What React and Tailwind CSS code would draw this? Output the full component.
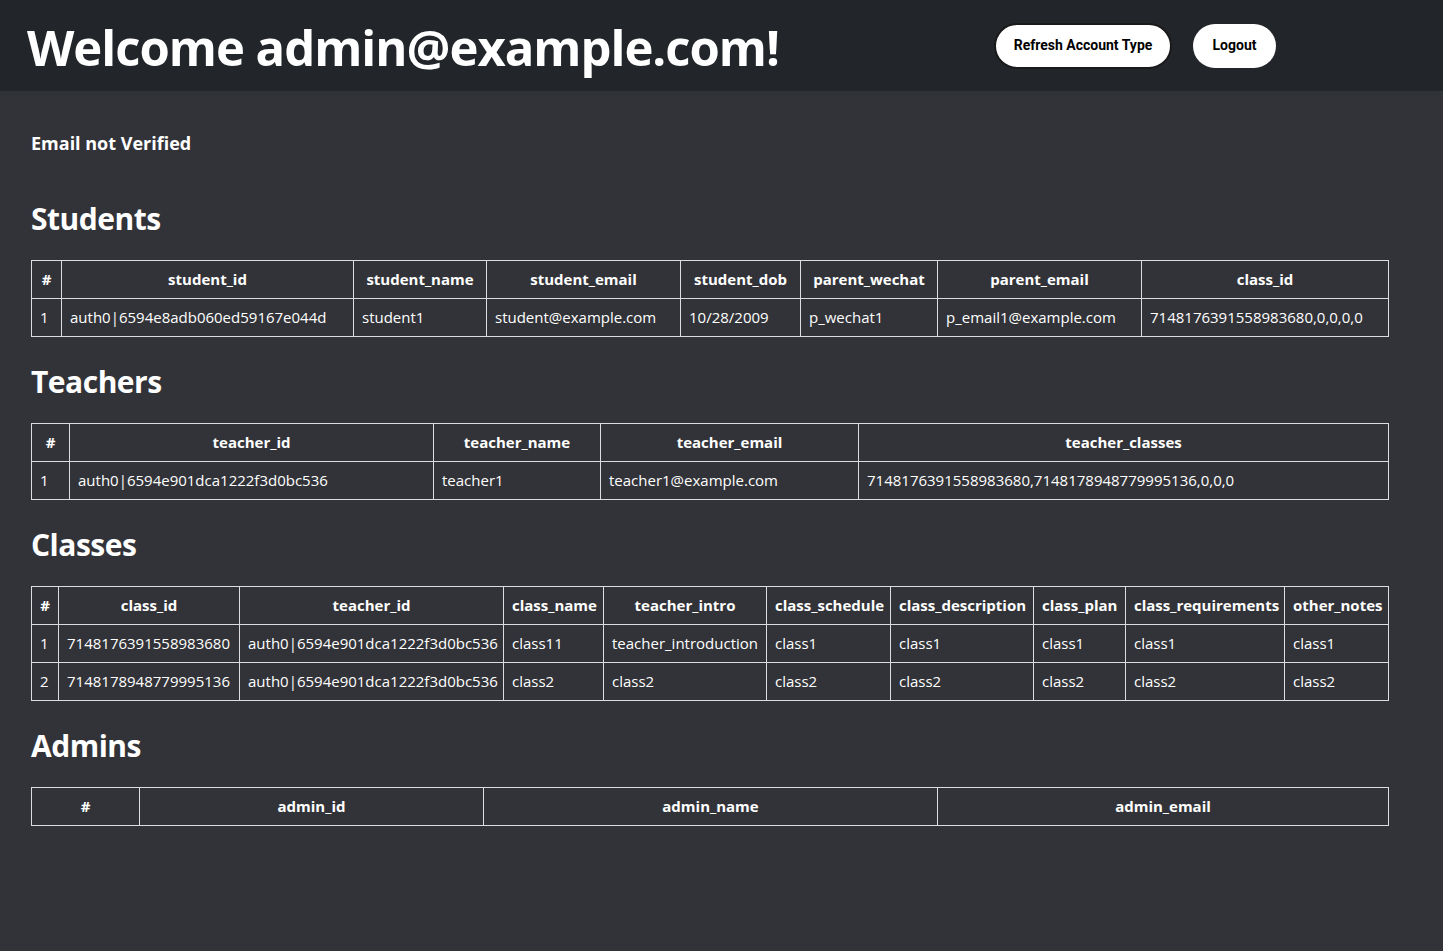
import React from "react";

const students = {
  cols: [
    ["#", 30],
    ["student_id", 292],
    ["student_name", 133],
    ["student_email", 194],
    ["student_dob", 120],
    ["parent_wechat", 137],
    ["parent_email", 204],
    ["class_id", 247],
  ],
  rows: [
    ["1", "auth0|6594e8adb060ed59167e044d", "student1", "student@example.com", "10/28/2009", "p_wechat1", "p_email1@example.com", "7148176391558983680,0,0,0,0"],
  ],
};

const teachers = {
  cols: [
    ["#", 38],
    ["teacher_id", 364],
    ["teacher_name", 167],
    ["teacher_email", 258],
    ["teacher_classes", 530],
  ],
  rows: [
    ["1", "auth0|6594e901dca1222f3d0bc536", "teacher1", "teacher1@example.com", "7148176391558983680,7148178948779995136,0,0,0"],
  ],
};

const classes = {
  cols: [
    ["#", 27],
    ["class_id", 181],
    ["teacher_id", 264],
    ["class_name", 100],
    ["teacher_intro", 163],
    ["class_schedule", 124],
    ["class_description", 143],
    ["class_plan", 92],
    ["class_requirements", 159],
    ["other_notes", 104],
  ],
  rows: [
    ["1", "7148176391558983680", "auth0|6594e901dca1222f3d0bc536", "class11", "teacher_introduction", "class1", "class1", "class1", "class1", "class1"],
    ["2", "7148178948779995136", "auth0|6594e901dca1222f3d0bc536", "class2", "class2", "class2", "class2", "class2", "class2", "class2"],
  ],
};

const admins = {
  cols: [
    ["#", 108],
    ["admin_id", 344],
    ["admin_name", 454],
    ["admin_email", 451],
  ],
  rows: [],
};

const DataTable = ({ data }) => (
  <table className="w-[1357px] table-fixed border-collapse text-white text-[15px]">
    <colgroup>
      {data.cols.map(([name, w]) => (
        <col key={name} style={{ width: w }} />
      ))}
    </colgroup>
    <thead>
      <tr>
        {data.cols.map(([name]) => (
          <th
            key={name}
            className="border border-[#dcdde0] px-2 py-[6px] leading-[25px] font-bold text-center whitespace-nowrap overflow-hidden"
          >
            {name}
          </th>
        ))}
      </tr>
    </thead>
    <tbody>
      {data.rows.map((row, i) => (
        <tr key={i}>
          {row.map((cell, j) => (
            <td
              key={j}
              className="border border-[#dcdde0] px-2 py-[6px] leading-[25px] text-left whitespace-nowrap overflow-hidden"
            >
              {cell}
            </td>
          ))}
        </tr>
      ))}
    </tbody>
  </table>
);

const Section = ({ title, data }) => (
  <section>
    <h2 className="mt-[26px] mb-[22px] text-[30px] leading-[38px] font-bold tracking-[-0.5px] text-white">
      {title}
    </h2>
    <DataTable data={data} />
  </section>
);

export default function App() {
  return (
    <div
      className="min-h-[951px] bg-[#323338]"
      style={{ fontFamily: '"Segoe UI", "Open Sans", "Noto Sans", sans-serif' }}
    >
      <header className="h-[91px] bg-[#222529] flex items-center pl-[27px] pr-[167px]">
        <h1 className="text-[49px] leading-none font-bold tracking-[-1px] text-white pt-1">
          Welcome admin@example.com!
        </h1>
        <div className="ml-auto flex items-center gap-[21px]" style={{ fontFamily: "Roboto, sans-serif" }}>
          <button className="h-[46px] w-[178px] rounded-full bg-white border-2 border-[#1a1a1a] text-[14px] font-bold text-black">
            Refresh Account Type
          </button>
          <button className="h-[44px] w-[83px] rounded-full bg-white text-[14px] font-bold text-black">
            Logout
          </button>
        </div>
      </header>

      <main className="px-[31px] pb-20">
        <p className="mt-[40px] text-[18px] leading-[24px] font-bold text-white">Email not Verified</p>
        <div className="mt-[19px] flex flex-col">
          <Section title="Students" data={students} />
          <Section title="Teachers" data={teachers} />
          <Section title="Classes" data={classes} />
          <Section title="Admins" data={admins} />
        </div>
      </main>
    </div>
  );
}
